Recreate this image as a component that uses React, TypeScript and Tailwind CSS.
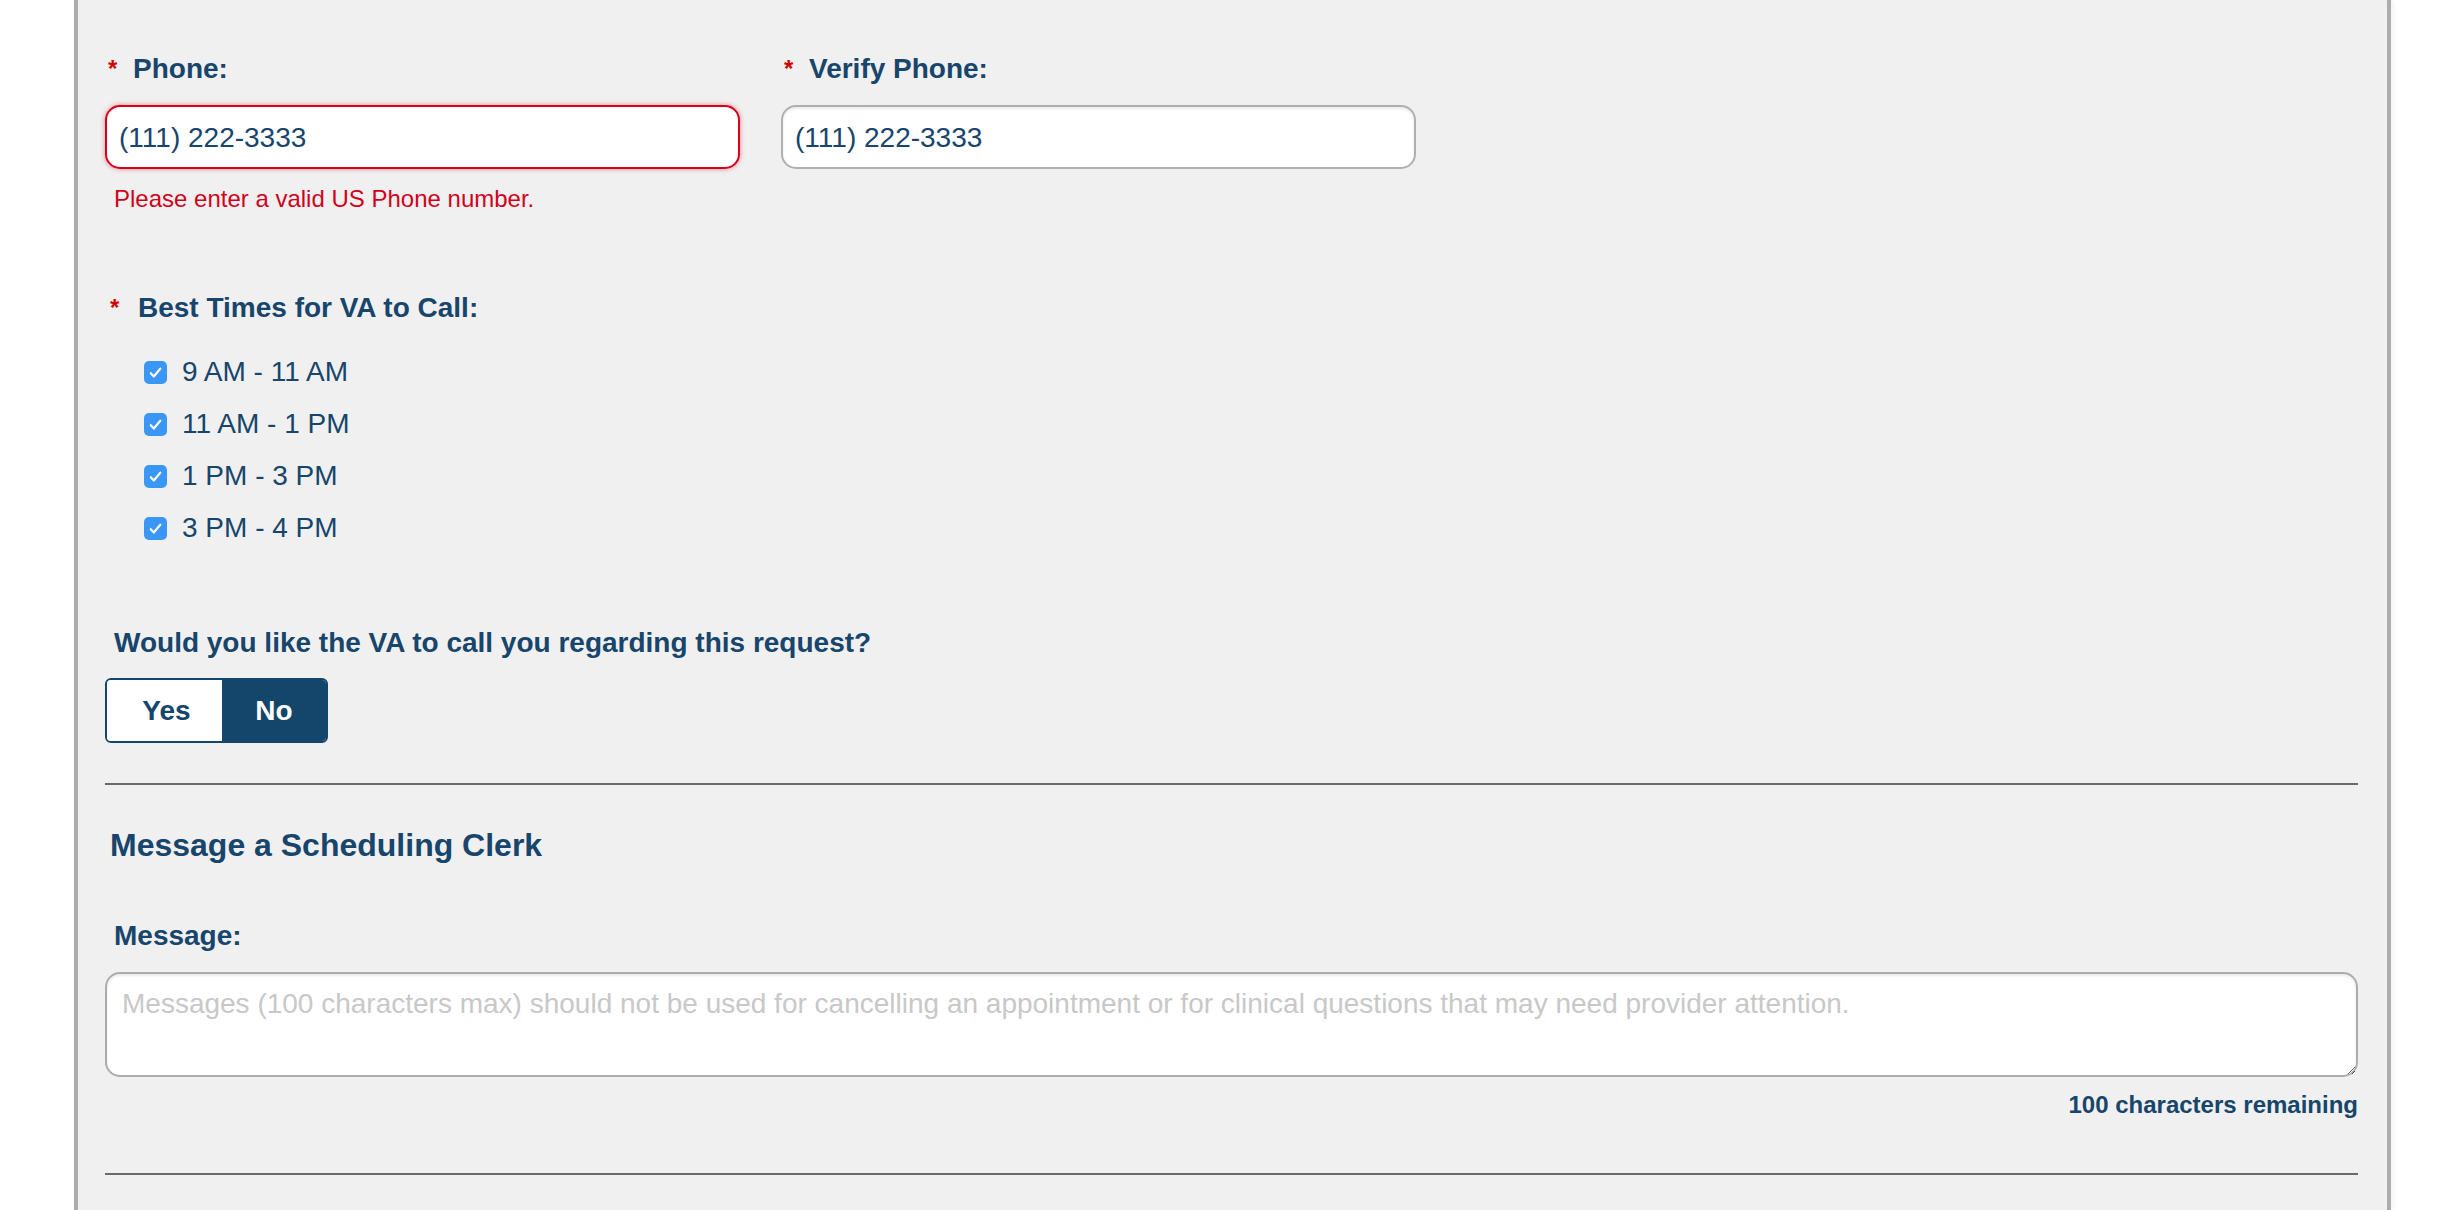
import { useState } from "react";

const times = ["9 AM - 11 AM", "11 AM - 1 PM", "1 PM - 3 PM", "3 PM - 4 PM"];

function Check() {
  return (
    <span className="w-[23px] h-[23px] rounded-[5px] bg-[#3b97f6] flex items-center justify-center shrink-0">
      <svg viewBox="0 0 16 16" className="w-[19px] h-[19px]" fill="none">
        <path d="M4 8.6l2.6 2.8L12 4.8" stroke="#fff" strokeWidth="1.8" strokeLinecap="round" strokeLinejoin="round" />
      </svg>
    </span>
  );
}

function RequiredLabel({ text }: { text: string }) {
  return (
    <div className="flex items-center h-[40px] leading-[40px] text-[28px] font-bold text-[#17456b]">
      <span className="w-[28px] pl-[3px] text-[24px] text-[#d40000]">*</span>
      <span>{text}</span>
    </div>
  );
}

export default function App() {
  const [callBack, setCallBack] = useState(false);
  const [msg, setMsg] = useState("");

  return (
    <div className="min-h-screen bg-white font-['Liberation_Sans',Arial,sans-serif]">
      <div className="ml-[74px] w-[2317px] min-h-[1210px] border-x-4 border-[#acacac] bg-[#f0f0f0] pl-[27px] pr-[29px] pt-[49px] shadow-[2px_0_6px_rgba(0,0,0,0.06)]">
        {/* Phone fields */}
        <div className="flex gap-[41px]">
          <div className="w-[635px]">
            <RequiredLabel text="Phone:" />
            <input
              defaultValue="(111) 222-3333"
              className="mt-[16px] w-full h-[64px] px-[12px] pt-[2px] rounded-[15px] bg-white border-2 border-[#d9001b] shadow-[0_0_5px_rgba(217,0,27,0.45)] text-[28px] text-[#17456b] outline-none"
            />
            <p className="mt-[15px] pl-[9px] text-[24px] leading-[30px] text-[#d0021b]">
              Please enter a valid US Phone number.
            </p>
          </div>
          <div className="w-[635px]">
            <RequiredLabel text="Verify Phone:" />
            <input
              defaultValue="(111) 222-3333"
              className="mt-[16px] w-full h-[64px] px-[12px] pt-[2px] rounded-[15px] bg-white border-2 border-[#b0b0b0] shadow-[inset_0_2px_3px_rgba(0,0,0,0.08)] text-[28px] text-[#17456b] outline-none"
            />
          </div>
        </div>

        {/* Best times */}
        <div className="mt-[74px] flex items-center h-[40px] text-[28px] font-bold text-[#17456b]">
          <span className="w-[33px] pl-[5px] text-[24px] text-[#d40000]">*</span>
          <span>Best Times for VA to Call:</span>
        </div>
        <div className="mt-[18px] pl-[39px]">
          {times.map((t) => (
            <label key={t} className="flex items-center gap-[15px] h-[52px] text-[28px] text-[#17456b]">
              <Check />
              <span>{t}</span>
            </label>
          ))}
        </div>

        {/* Call back */}
        <p className="mt-[69px] pl-[9px] h-[40px] leading-[40px] text-[28px] font-bold text-[#17456b]">
          Would you like the VA to call you regarding this request?
        </p>
        <div className="mt-[15px] flex w-fit h-[65px] rounded-[6px] border-2 border-[#14456a] overflow-hidden text-[28px] font-bold">
          <button
            onClick={() => setCallBack(true)}
            className={`w-[115px] pl-[4px] ${callBack ? "bg-[#14456a] text-white" : "bg-white text-[#14456a]"}`}
          >
            Yes
          </button>
          <button
            onClick={() => setCallBack(false)}
            className={`w-[104px] ${callBack ? "bg-white text-[#14456a]" : "bg-[#14456a] text-white"}`}
          >
            No
          </button>
        </div>

        <div className="mt-[40px] h-[2px] bg-[#6b6b6b]" />

        {/* Message section */}
        <h2 className="mt-[40px] pl-[5px] h-[40px] leading-[40px] text-[32px] font-bold text-[#17456b]">
          Message a Scheduling Clerk
        </h2>
        <p className="mt-[51px] pl-[9px] h-[40px] leading-[40px] text-[28px] font-bold text-[#17456b]">
          Message:
        </p>
        <textarea
          value={msg}
          maxLength={100}
          onChange={(e) => setMsg(e.target.value)}
          placeholder="Messages (100 characters max) should not be used for cancelling an appointment or for clinical questions that may need provider attention."
          className="mt-[16px] block w-full h-[105px] px-[15px] py-[13px] rounded-[15px] bg-white border-2 border-[#acacac] shadow-[inset_0_2px_3px_rgba(0,0,0,0.08)] text-[28px] leading-[34px] text-[#17456b] placeholder:text-[#c8c8c8] outline-none"
        />
        <p className="mt-[13px] text-right text-[24px] leading-[30px] font-bold text-[#17456b]">
          {100 - msg.length} characters remaining
        </p>

        <div className="mt-[53px] h-[2px] bg-[#6b6b6b]" />
      </div>
    </div>
  );
}
